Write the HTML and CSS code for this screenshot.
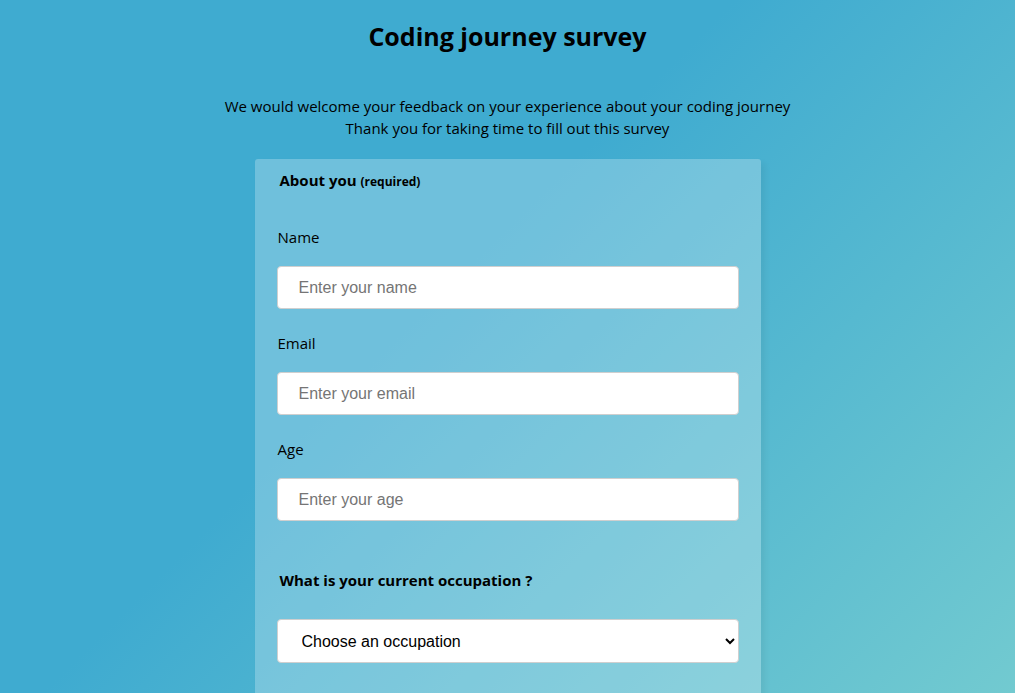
FILE: index.html
```html
<!DOCTYPE html>
<html lang="en">
<head>
<meta charset="utf-8">
<title>Coding journey survey</title>
<link rel="stylesheet" href="styles.css">
</head>
<body>
  <header class="intro">
    <h1 class="title">Coding journey survey</h1>
    <p class="description">We would welcome your feedback on your experience about your coding journey<br>Thank you for taking time to fill out this survey</p>
  </header>
  <form class="survey">
    <fieldset class="group">
      <legend class="legend">About you <small class="req">(required)</small></legend>
      <label class="label" for="name">Name</label>
      <input class="field" id="name" type="text" placeholder="Enter your name">
      <label class="label" for="email">Email</label>
      <input class="field" id="email" type="email" placeholder="Enter your email">
      <label class="label" for="age">Age</label>
      <input class="field" id="age" type="number" placeholder="Enter your age">
    </fieldset>
    <div class="question">
      <p class="q-title">What is your current occupation ?</p>
      <select class="select">
        <option>Choose an occupation</option>
      </select>
    </div>
  </form>
</body>
</html>
```
FILE: styles.css
```css
html, body {
  height: 100%;
}
body {
  margin: 0;
  font-family: "Open Sans", "Liberation Sans", sans-serif;
  color: #000;
  background: linear-gradient(135deg, #3fabd0 43%, #72cad0 100%);
  background-attachment: fixed;
  overflow: hidden;
}
.intro {
  text-align: center;
}
.title {
  margin: 0;
  padding-top: 19px;
  font-size: 25px;
  line-height: 34px;
  font-weight: 700;
}
.description {
  margin: 42px 0 0;
  font-size: 15px;
  line-height: 22px;
}
.survey {
  width: 506px;
  margin: 20px auto 0;
  background: rgba(255, 255, 255, 0.25);
  border-radius: 3px;
  box-shadow: 4px 4px 6px rgba(0, 0, 0, 0.06);
  padding: 11px 22px 40px;
  box-sizing: border-box;
}
.group {
  border: 0;
  margin: 0;
  padding: 0;
  display: flex;
  flex-direction: column;
}
.legend {
  padding: 0 0 0 3px;
  font-size: 15px;
  line-height: 20px;
  font-weight: 700;
  margin-bottom: 35px;
  float: left;
}
.req {
  font-size: 12px;
}
.label {
  font-size: 15px;
  line-height: 20px;
  margin: 0 0 19px;
  padding-left: 1px;
}
.field {
  height: 43px;
  box-sizing: border-box;
  border: 1px solid #cfcfcf;
  border-radius: 4px;
  background: #fff;
  padding: 0 20px 0 21px;
  font-family: "Liberation Sans", Arial, sans-serif;
  font-size: 16px;
  margin: 0 0 24px;
}
.field::placeholder {
  color: #757575;
}
.question {
  padding-top: 25px;
}
.q-title {
  margin: 0 0 29px;
  padding-left: 3px;
  font-size: 15px;
  line-height: 20px;
  font-weight: 700;
}
.select {
  width: 100%;
  height: 44px;
  box-sizing: border-box;
  border: 1px solid #cfcfcf;
  border-radius: 4px;
  background: #fff;
  padding: 0 20px;
  font-family: "Liberation Sans", Arial, sans-serif;
  font-size: 16px;
  color: #000;
}
```
